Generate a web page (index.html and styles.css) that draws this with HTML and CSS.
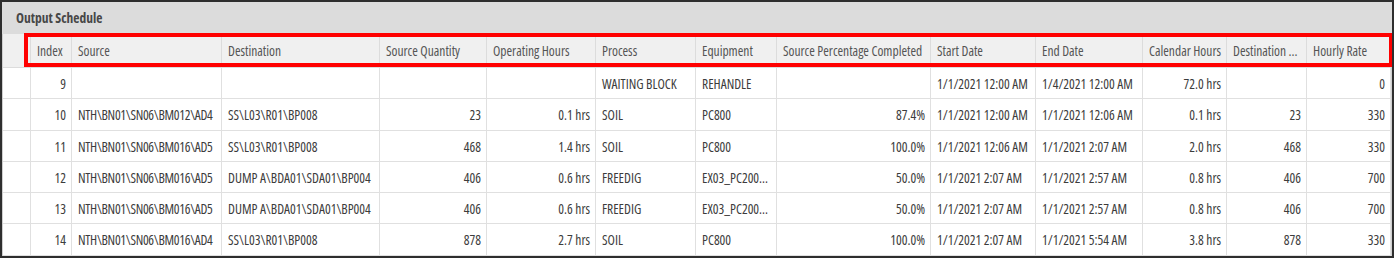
FILE: index.html
```html
<!DOCTYPE html>
<html>
<head>
<meta charset="utf-8">
<title>Output Schedule</title>
<link rel="stylesheet" href="styles.css">
</head>
<body>
<div class="panel">
  <div class="titlebar">Output Schedule</div>
  <div class="grid">
    <div class="row head">
      <div class="c ind"></div>
      <div class="c">Index</div>
      <div class="c">Source</div>
      <div class="c">Destination</div>
      <div class="c">Source Quantity</div>
      <div class="c">Operating Hours</div>
      <div class="c">Process</div>
      <div class="c">Equipment</div>
      <div class="c">Source Percentage Completed</div>
      <div class="c">Start Date</div>
      <div class="c">End Date</div>
      <div class="c">Calendar Hours</div>
      <div class="c">Destination ...</div>
      <div class="c">Hourly Rate</div>
    </div>
    <div class="body">
      <div class="row">
        <div class="c ind"></div>
        <div class="c r">9</div>
        <div class="c path"></div>
        <div class="c"></div>
        <div class="c r"></div>
        <div class="c r"></div>
        <div class="c">WAITING BLOCK</div>
        <div class="c">REHANDLE</div>
        <div class="c r"></div>
        <div class="c">1/1/2021 12:00 AM</div>
        <div class="c">1/4/2021 12:00 AM</div>
        <div class="c r">72.0 hrs</div>
        <div class="c r"></div>
        <div class="c r">0</div>
      </div>
      <div class="row">
        <div class="c ind"></div>
        <div class="c r">10</div>
        <div class="c path">NTH\BN01\SN06\BM012\AD4</div>
        <div class="c">SS\L03\R01\BP008</div>
        <div class="c r">23</div>
        <div class="c r">0.1 hrs</div>
        <div class="c">SOIL</div>
        <div class="c">PC800</div>
        <div class="c r">87.4%</div>
        <div class="c">1/1/2021 12:00 AM</div>
        <div class="c">1/1/2021 12:06 AM</div>
        <div class="c r">0.1 hrs</div>
        <div class="c r">23</div>
        <div class="c r">330</div>
      </div>
      <div class="row">
        <div class="c ind"></div>
        <div class="c r">11</div>
        <div class="c path">NTH\BN01\SN06\BM016\AD5</div>
        <div class="c">SS\L03\R01\BP008</div>
        <div class="c r">468</div>
        <div class="c r">1.4 hrs</div>
        <div class="c">SOIL</div>
        <div class="c">PC800</div>
        <div class="c r">100.0%</div>
        <div class="c">1/1/2021 12:06 AM</div>
        <div class="c">1/1/2021 2:07 AM</div>
        <div class="c r">2.0 hrs</div>
        <div class="c r">468</div>
        <div class="c r">330</div>
      </div>
      <div class="row">
        <div class="c ind"></div>
        <div class="c r">12</div>
        <div class="c path">NTH\BN01\SN06\BM016\AD5</div>
        <div class="c">DUMP A\BDA01\SDA01\BP004</div>
        <div class="c r">406</div>
        <div class="c r">0.6 hrs</div>
        <div class="c">FREEDIG</div>
        <div class="c">EX03_PC200...</div>
        <div class="c r">50.0%</div>
        <div class="c">1/1/2021 2:07 AM</div>
        <div class="c">1/1/2021 2:57 AM</div>
        <div class="c r">0.8 hrs</div>
        <div class="c r">406</div>
        <div class="c r">700</div>
      </div>
      <div class="row">
        <div class="c ind"></div>
        <div class="c r">13</div>
        <div class="c path">NTH\BN01\SN06\BM016\AD5</div>
        <div class="c">DUMP A\BDA01\SDA01\BP004</div>
        <div class="c r">406</div>
        <div class="c r">0.6 hrs</div>
        <div class="c">FREEDIG</div>
        <div class="c">EX03_PC200...</div>
        <div class="c r">50.0%</div>
        <div class="c">1/1/2021 2:07 AM</div>
        <div class="c">1/1/2021 2:57 AM</div>
        <div class="c r">0.8 hrs</div>
        <div class="c r">406</div>
        <div class="c r">700</div>
      </div>
      <div class="row">
        <div class="c ind"></div>
        <div class="c r">14</div>
        <div class="c path">NTH\BN01\SN06\BM016\AD4</div>
        <div class="c">SS\L03\R01\BP008</div>
        <div class="c r">878</div>
        <div class="c r">2.7 hrs</div>
        <div class="c">SOIL</div>
        <div class="c">PC800</div>
        <div class="c r">100.0%</div>
        <div class="c">1/1/2021 2:07 AM</div>
        <div class="c">1/1/2021 5:54 AM</div>
        <div class="c r">3.8 hrs</div>
        <div class="c r">878</div>
        <div class="c r">330</div>
      </div>
    </div>
  </div>
  <div class="highlight"></div>
</div>
</body>
</html>
```
FILE: styles.css
```css
* { box-sizing: border-box; }

html, body {
  margin: 0;
  padding: 0;
  background: #ffffff;
}

body {
  font-family: "Open Sans", "DejaVu Sans", sans-serif;
  font-stretch: 75%;
  font-size: 13.5px;
  color: #3c3c3c;
}

.panel {
  position: relative;
  width: 1394px;
  height: 258px;
  border: 2px solid #2e2e2e;
  background: #cfcfcf;
  display: flex;
  flex-direction: column;
  overflow: hidden;
}

.titlebar {
  height: 32px;
  flex: none;
  background: #dcdcdc;
  padding-left: 14px;
  display: flex;
  align-items: center;
  font-weight: 700;
  color: #474747;
  font-size: 13.5px;
}

.grid {
  flex: 1;
  margin: 0 1px;
  display: flex;
  flex-direction: column;
  overflow: hidden;
  background: #ffffff;
}

.row {
  display: grid;
  grid-template-columns: 28px 41px 150px 158px 107px 109px 100px 81px 154px 105px 107px 84px 80px 84px;
  height: 31.25px;
  flex: none;
}

.c {
  border-right: 1px solid #e0e0e0;
  border-bottom: 1px solid #e0e0e0;
  padding: 2px 5px 0 6px;
  display: flex;
  align-items: center;
  white-space: nowrap;
  overflow: hidden;
}

.c.r {
  justify-content: flex-end;
}

.c.path {
  letter-spacing: -0.3px;
}

.head {
  height: 34px;
  background: #f0f0f0;
  color: #555555;
}

.head .c {
  padding-top: 0;
  border-color: #dcdcdc;
}

.body {
  flex: 1;
  overflow: hidden;
}

.highlight {
  position: absolute;
  left: 22px;
  top: 31px;
  width: 1369px;
  height: 34px;
  border: 4px solid #ff0000;
}
```
